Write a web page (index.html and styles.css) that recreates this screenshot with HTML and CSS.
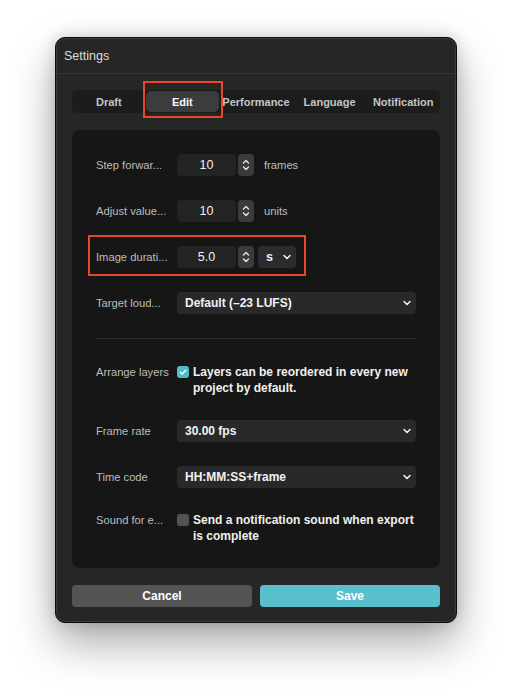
FILE: index.html
```html
<!DOCTYPE html>
<html>
<head>
<meta charset="utf-8">
<link rel="stylesheet" href="styles.css">
</head>
<body>
<div class="window">
  <div class="titlebar">Settings</div>
  <div class="body">
    <div class="tabs">
      <div class="tab">Draft</div>
      <div class="tab active">Edit</div>
      <div class="tab">Performance</div>
      <div class="tab">Language</div>
      <div class="tab">Notification</div>
    </div>
    <div class="panel">
      <div class="row">
        <div class="label">Step forwar...</div>
        <div class="num">10</div>
        <div class="spin"><svg width="16" height="22" viewBox="0 0 16 22"><path d="M5.5 9 L8 6.5 L10.5 9 M5.5 13 L8 15.5 L10.5 13" fill="none" stroke="#e6e6e6" stroke-width="1.4" stroke-linecap="round" stroke-linejoin="round"/></svg></div>
        <div class="unit">frames</div>
      </div>
      <div class="row">
        <div class="label">Adjust value...</div>
        <div class="num">10</div>
        <div class="spin"><svg width="16" height="22" viewBox="0 0 16 22"><path d="M5.5 9 L8 6.5 L10.5 9 M5.5 13 L8 15.5 L10.5 13" fill="none" stroke="#e6e6e6" stroke-width="1.4" stroke-linecap="round" stroke-linejoin="round"/></svg></div>
        <div class="unit">units</div>
      </div>
      <div class="row">
        <div class="label">Image durati...</div>
        <div class="num">5.0</div>
        <div class="spin"><svg width="16" height="22" viewBox="0 0 16 22"><path d="M5.5 9 L8 6.5 L10.5 9 M5.5 13 L8 15.5 L10.5 13" fill="none" stroke="#e6e6e6" stroke-width="1.4" stroke-linecap="round" stroke-linejoin="round"/></svg></div>
        <div class="mini-select"><span>s</span><svg width="10" height="8" viewBox="0 0 10 8"><path d="M2 2.5 L5 5.5 L8 2.5" fill="none" stroke="#f0f0f0" stroke-width="1.6" stroke-linecap="round" stroke-linejoin="round"/></svg></div>
      </div>
      <div class="row">
        <div class="label">Target loud...</div>
        <div class="select"><span>Default (–23 LUFS)</span><svg width="10" height="8" viewBox="0 0 10 8"><path d="M2 2.5 L5 5.5 L8 2.5" fill="none" stroke="#f0f0f0" stroke-width="1.6" stroke-linecap="round" stroke-linejoin="round"/></svg></div>
      </div>
      <div class="divider"></div>
      <div class="row top">
        <div class="label">Arrange layers</div>
        <div class="check on"><svg width="12" height="12" viewBox="0 0 12 12"><path d="M3.2 6.2 L5.2 8 L8.8 4.2" fill="none" stroke="#fff" stroke-width="1.5" stroke-linecap="round" stroke-linejoin="round"/></svg></div>
        <div class="checktext">Layers can be reordered in every new project by default.</div>
      </div>
      <div class="row">
        <div class="label">Frame rate</div>
        <div class="select"><span>30.00 fps</span><svg width="10" height="8" viewBox="0 0 10 8"><path d="M2 2.5 L5 5.5 L8 2.5" fill="none" stroke="#f0f0f0" stroke-width="1.6" stroke-linecap="round" stroke-linejoin="round"/></svg></div>
      </div>
      <div class="row">
        <div class="label">Time code</div>
        <div class="select"><span>HH:MM:SS+frame</span><svg width="10" height="8" viewBox="0 0 10 8"><path d="M2 2.5 L5 5.5 L8 2.5" fill="none" stroke="#f0f0f0" stroke-width="1.6" stroke-linecap="round" stroke-linejoin="round"/></svg></div>
      </div>
      <div class="row top">
        <div class="label">Sound for e...</div>
        <div class="check"></div>
        <div class="checktext">Send a notification sound when export is complete</div>
      </div>
    </div>
    <div class="buttons">
      <div class="btn cancel">Cancel</div>
      <div class="btn save">Save</div>
    </div>
  </div>
  <div class="mark mark-tab"></div>
  <div class="mark mark-duration"></div>
</div>
</body>
</html>
```
FILE: styles.css
```css
* { box-sizing: border-box; }
html, body { margin: 0; padding: 0; }
body {
  background: #ffffff;
  font-family: "Liberation Sans", Arial, sans-serif;
  width: 512px;
  height: 697px;
  overflow: hidden;
}
.window {
  position: relative;
  margin: 37px 0 0 55px;
  width: 402px;
  height: 586px;
  background: #262626;
  border-radius: 10px;
  border: 1px solid #0c0c0c;
  box-shadow: inset 0 0 0 1px #3c3c3c, 0 20px 44px rgba(0,0,0,0.34), 0 0 16px rgba(0,0,0,0.16);
}
.titlebar {
  height: 36px;
  padding-left: 8px;
  padding-top: 1px;
  display: flex;
  align-items: center;
  color: #dcdcdc;
  font-size: 12.5px;
  border-bottom: 1px solid #353535;
}
.body {
  padding: 16px 16px 0 16px;
}
.tabs {
  display: flex;
  height: 23px;
  background: #1c1c1c;
  border-radius: 5px;
  padding: 1px 0;
}
.tab {
  flex: 1;
  display: flex;
  align-items: center;
  justify-content: center;
  font-size: 11px;
  font-weight: bold;
  color: #c4c4c4;
  border-radius: 5px;
  white-space: nowrap;
}
.tab.active {
  background: #3c3c3c;
  color: #fafafa;
}
.panel {
  margin-top: 17px;
  height: 438px;
  background: #161616;
  border-radius: 8px;
  padding: 24px 24px 0 24px;
  display: flex;
  flex-direction: column;
  gap: 24px;
}
.row {
  display: flex;
  align-items: center;
  height: 22px;
}
.row.top {
  align-items: flex-start;
  height: auto;
}
.label {
  width: 74px;
  margin-right: 7px;
  font-size: 11.2px;
  color: #bdbdbd;
  white-space: nowrap;
  flex: none;
}
.row.top .label { line-height: 16px; }
.num {
  width: 59px;
  height: 22px;
  background: #232323;
  border-radius: 4px;
  color: #f2f2f2;
  font-size: 12.5px;
  display: flex;
  align-items: center;
  justify-content: center;
}
.spin {
  width: 16px;
  height: 22px;
  margin-left: 2px;
  background: #3b3b3b;
  border-radius: 4px;
}
.spin svg { display: block; }
.unit {
  margin-left: 10px;
  font-size: 11.2px;
  color: #bdbdbd;
}
.mini-select {
  margin-left: 4px;
  width: 38px;
  height: 22px;
  background: #2c2c2e;
  border-radius: 4px;
  display: flex;
  align-items: center;
  justify-content: space-between;
  padding: 0 4px 0 8px;
  color: #f0f0f0;
  font-size: 12.5px;
  font-weight: bold;
}
.select {
  flex: 1;
  height: 22px;
  background: #29292c;
  border-radius: 4px;
  display: flex;
  align-items: center;
  justify-content: space-between;
  padding: 0 4px 0 8px;
  color: #f2f2f2;
  font-size: 12px;
  font-weight: bold;
}
.select svg, .mini-select svg { display: block; }
.divider {
  height: 1px;
  background: #2c2c2c;
  margin-bottom: 1px;
  flex: none;
}
.check {
  width: 12px;
  height: 12px;
  border-radius: 3px;
  background: #525254;
  margin-top: 2px;
  flex: none;
}
.check.on { background: #4fbccb; }
.check svg { display: block; }
.checktext {
  margin-left: 4px;
  font-size: 12px;
  line-height: 16px;
  color: #f0f0f0;
  font-weight: bold;
  width: 222px;
}
.buttons {
  margin-top: 17px;
  display: flex;
  gap: 8px;
}
.btn {
  flex: 1;
  height: 22px;
  border-radius: 4px;
  display: flex;
  align-items: center;
  justify-content: center;
  color: #ffffff;
  font-size: 12px;
  font-weight: bold;
}
.cancel { background: #545454; }
.save { background: #58c0cc; }
.mark {
  position: absolute;
  border: 2px solid #e8472b;
}
.mark-tab {
  left: 87px;
  top: 43px;
  width: 80px;
  height: 37px;
}
.mark-duration {
  left: 32px;
  top: 197px;
  width: 218px;
  height: 41px;
}
```
